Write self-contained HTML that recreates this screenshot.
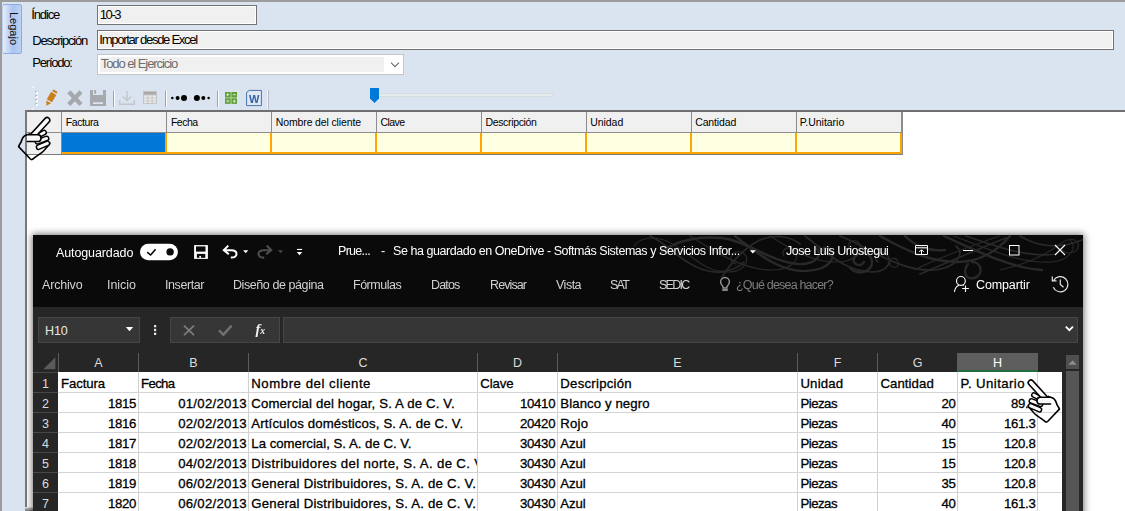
<!DOCTYPE html>
<html lang="es">
<head>
<meta charset="utf-8">
<title>Importar desde Excel</title>
<style>
html,body{margin:0;padding:0;}
body{width:1125px;height:511px;overflow:hidden;position:relative;background:#dae3f0;font-family:"Liberation Sans",sans-serif;}
.a{position:absolute;box-sizing:border-box;}
.tx{position:absolute;white-space:nowrap;line-height:20px;font-family:"Liberation Sans",sans-serif;}
#tab span{position:absolute;left:4px;top:7px;writing-mode:vertical-rl;font-size:11px;line-height:13px;color:#111;}
.g{will-change:transform;}
.k{-webkit-text-stroke:0.3px #000;}
.inp{border:1px solid #737373;background:#f0f0f0;box-shadow:inset 0 0 0 1px #fff;}
.gh{top:112px;height:21px;background:#f0f0f0;border-right:1px solid #8c8c8c;border-bottom:1px solid #8c8c8c;}
.gc{top:133px;height:21px;background:#ffffe1;border-right:2px solid #ffa500;border-bottom:2px solid #ffa500;}
.fbox{top:317px;height:26px;background:#363636;border:1px solid #464646;}
.ch{top:353px;height:19px;border-right:1px solid #5c5c5c;}
.vl{top:372px;width:1px;height:139px;background:#d0d0d0;}
.hl{left:58px;width:1003.5px;height:1px;background:#d4d4d4;}
.rl{left:33px;width:25px;height:1px;background:#474747;}
</style>
</head>
<body>
<!-- main white work area + grid frame -->
<div class="a" style="left:27px;top:112px;width:1098px;height:399px;background:#fff;"></div>
<div class="a" style="left:25px;top:110px;width:1100px;height:2px;background:#6f6f6f;"></div>
<div class="a" style="left:25px;top:110px;width:2px;height:401px;background:#7a7a7a;"></div>
<div class="a" style="left:0;top:0;width:1125px;height:2px;background:#9c9c9c;"></div>
<div class="a" style="left:0;top:0;width:2px;height:511px;background:#9c9c9c;"></div>
<!-- vertical tab -->
<div class="a" id="tab" style="left:2px;top:4px;width:20px;height:50px;border:1px solid #8dabe2;border-left:1px solid #bccff0;border-radius:3px;background:linear-gradient(90deg,#e6edf9 0%,#a9c4f0 55%,#bfd2f3 100%);"><span>Legajo</span></div>
<!-- form fields -->
<div class="a inp" style="left:97px;top:5px;width:160px;height:20px;"></div>
<div class="a inp" style="left:97px;top:30px;width:1017px;height:20px;"></div>
<div class="a" style="left:97px;top:54px;width:307px;height:21px;background:#fff;border:1px solid #c6c6c6;"><div class="a" style="left:2px;top:2px;width:284px;height:15px;background:#f0f0f0;"></div></div>

<!-- data grid -->
<div class="a gh" style="left:27px;width:35px;"></div>
<div class="a gh" style="left:27px;top:133px;width:35px;height:21px;border-bottom:none;"></div>
<div class="a gh" style="left:62px;width:105px;"></div>
<div class="a gh" style="left:167px;width:105px;"></div>
<div class="a gh" style="left:272px;width:105px;"></div>
<div class="a gh" style="left:377px;width:105px;"></div>
<div class="a gh" style="left:482px;width:105px;"></div>
<div class="a gh" style="left:587px;width:105px;"></div>
<div class="a gh" style="left:692px;width:105px;"></div>
<div class="a gh" style="left:797px;width:105px;"></div>
<div class="a gc" style="left:62px;width:105px;background:#0078d7;"></div>
<div class="a gc" style="left:167px;width:105px;"></div>
<div class="a gc" style="left:272px;width:105px;"></div>
<div class="a gc" style="left:377px;width:105px;"></div>
<div class="a gc" style="left:482px;width:105px;"></div>
<div class="a gc" style="left:587px;width:105px;"></div>
<div class="a gc" style="left:692px;width:105px;"></div>
<div class="a gc" style="left:797px;width:105px;"></div>
<div class="a" style="left:902px;top:112px;width:1px;height:43px;background:#8c8c8c;"></div>
<div class="a" style="left:27px;top:154px;width:876px;height:1px;background:#7c7c7c;"></div>

<div class="a" style="left:25px;top:507px;width:8px;height:4px;background:linear-gradient(180deg,#f4f4f4 0%,#b0b0b0 40%,#7d7d7d 100%);"></div>
<!-- Excel window -->
<div class="a" style="left:33px;top:235px;width:1050px;height:290px;background:#0a0a0a;box-shadow:0 0 7px 1px rgba(0,0,0,.55);"></div>
<div class="a" style="left:33px;top:307px;width:1050px;height:204px;background:#262626;"></div>
<div class="a fbox" style="left:38px;width:102px;"></div>
<div class="a fbox" style="left:170px;width:110px;"></div>
<div class="a fbox" style="left:283px;width:795px;"></div>
<!-- sheet -->
<div class="a" style="left:58px;top:372px;width:1003.5px;height:139px;background:#fff;"></div>
<div class="a ch" style="left:59px;width:80px;"></div>
<div class="a ch" style="left:139px;width:110px;"></div>
<div class="a ch" style="left:249px;width:229px;"></div>
<div class="a ch" style="left:478px;width:80px;"></div>
<div class="a ch" style="left:558px;width:240px;"></div>
<div class="a ch" style="left:798px;width:80px;"></div>
<div class="a ch" style="left:878px;width:80px;"></div>
<div class="a" style="left:958px;top:353px;width:80px;height:19px;background:#5e5e5e;border-bottom:2px solid #1d6f42;"></div>
<div class="a" style="left:58px;top:353px;width:1px;height:19px;background:#5c5c5c;"></div>
<div class="a vl" style="left:138px;"></div>
<div class="a vl" style="left:248px;"></div>
<div class="a vl" style="left:477px;"></div>
<div class="a vl" style="left:557px;"></div>
<div class="a vl" style="left:797px;"></div>
<div class="a vl" style="left:877px;"></div>
<div class="a vl" style="left:957px;"></div>
<div class="a vl" style="left:1037px;"></div>
<div class="a hl" style="top:392px;"></div>
<div class="a hl" style="top:412px;"></div>
<div class="a hl" style="top:432px;"></div>
<div class="a hl" style="top:452px;"></div>
<div class="a hl" style="top:472px;"></div>
<div class="a hl" style="top:492px;"></div>
<div class="a rl" style="top:392px;"></div>
<div class="a rl" style="top:412px;"></div>
<div class="a rl" style="top:432px;"></div>
<div class="a rl" style="top:452px;"></div>
<div class="a rl" style="top:472px;"></div>
<div class="a rl" style="top:492px;"></div>
<div class="a" style="left:33px;top:372px;width:25px;height:1px;background:#474747;"></div>
<!-- scrollbar -->
<div class="a" style="left:1066px;top:355px;width:13px;height:14px;background:#4f4f4f;"></div>
<div class="a" style="left:1066px;top:371px;width:13px;height:140px;background:#555555;"></div>

<svg class="a" style="left:0;top:0;" width="1125" height="511" viewBox="0 0 1125 511">
<!-- title-bar calligraphic decoration -->
<g fill="none" stroke="#292929" stroke-width="1.7" stroke-linecap="round">
<path d="M634,246 C640,238 652,236 664,240 C690,250 700,272 728,272 C748,272 752,254 740,252 C730,251 728,262 736,264" stroke-width="1.2"/>
<path d="M650,236 C668,244 680,262 704,270 C720,275 736,270 744,262"/>
<path d="M662,252 C676,240 700,236 722,238 C748,241 770,262 798,264 C816,265 824,254 816,248" stroke-width="2.4"/>
<path d="M690,236 C712,250 742,270 772,270 C792,270 802,258 794,250 C788,245 780,250 784,256" stroke-width="1.2"/>
<path d="M722,277 C728,268 740,250 760,240 C774,234 790,236 800,244"/>
<path d="M735,236 C760,256 790,280 822,268 C838,260 834,246 824,248" stroke-width="2.4"/>
<path d="M770,236 C792,250 812,262 836,262 C856,262 866,250 858,242 C852,238 846,244 850,248" stroke-width="1.2"/>
<path d="M805,236 C826,252 846,272 872,272 C888,272 894,260 886,254 C878,250 872,258 878,262"/>
<path d="M850,268 C858,276 872,272 872,262 C872,252 858,250 854,258 C852,264 860,268 864,262" stroke-width="2.4"/>
<path d="M888,262 C892,270 900,268 898,262 C896,256 888,258 890,264" stroke-width="1.2"/>
<path d="M840,236 C870,248 900,272 934,270 C956,268 966,254 956,246"/>
<path d="M880,236 C905,250 930,262 958,262 C982,262 1000,248 1010,236" stroke-width="2.4"/>
<path d="M914,270 C930,262 960,250 999,236" stroke-width="1.2"/>
<path d="M920,274 C945,264 975,250 1006,238"/>
<path d="M944,236 C975,250 1010,268 1042,270" stroke-width="2.4"/>
<path d="M954,236 C985,248 1020,264 1052,262 C1070,260 1078,248 1070,240" stroke-width="1.2"/>
<path d="M966,236 C1000,248 1030,258 1056,254"/>
<path d="M968,264 C962,272 966,280 974,278 C984,275 982,262 972,262" stroke-width="2.4"/>
<path d="M1000,270 C1020,266 1045,256 1060,244 C1068,238 1076,238 1078,244 C1080,252 1068,256 1062,250" stroke-width="1.2"/>
<path d="M1020,236 C1036,246 1058,250 1082,240"/>
<path d="M905,236 C915,246 930,252 945,250" stroke-width="2.4"/>
</g>
</svg>

<div class="tx" style="top:5.16px;font-size:13.1px;color:#000;left:31.30px;letter-spacing:-1.180px;">Índice</div>
<div class="tx" style="top:31.16px;font-size:13.1px;color:#000;left:32.30px;letter-spacing:-1.250px;">Descripción</div>
<div class="tx" style="top:53.16px;font-size:13.1px;color:#000;left:32.30px;letter-spacing:-1.257px;">Período:</div>
<div class="tx" style="top:5.16px;font-size:13.1px;color:#000;left:99.70px;letter-spacing:-1.433px;">10-3</div>
<div class="tx" style="top:30.16px;font-size:13.1px;color:#000;left:99.30px;letter-spacing:-1.305px;">Importar desde Excel</div>
<div class="tx" style="top:54.16px;font-size:13.1px;color:#6d6d6d;left:100.70px;letter-spacing:-1.106px;">Todo el Ejercicio</div>
<div class="tx" style="top:112.26px;font-size:10.5px;color:#000;left:65.80px;letter-spacing:-0.433px;">Factura</div>
<div class="tx" style="top:112.26px;font-size:10.5px;color:#000;left:170.90px;letter-spacing:-0.475px;">Fecha</div>
<div class="tx" style="top:112.26px;font-size:10.5px;color:#000;left:275.80px;letter-spacing:-0.135px;">Nombre del cliente</div>
<div class="tx" style="top:112.26px;font-size:10.5px;color:#000;left:380.60px;letter-spacing:-0.575px;">Clave</div>
<div class="tx" style="top:112.26px;font-size:10.5px;color:#000;left:485.50px;letter-spacing:-0.350px;">Descripción</div>
<div class="tx" style="top:112.26px;font-size:10.5px;color:#000;left:590.20px;letter-spacing:-0.040px;">Unidad</div>
<div class="tx" style="top:112.26px;font-size:10.5px;color:#000;left:695.20px;letter-spacing:-0.129px;">Cantidad</div>
<div class="tx" style="top:112.26px;font-size:10.5px;color:#000;left:799.70px;letter-spacing:-0.022px;">P.Unitario</div>
<div class="tx g" style="top:242.87px;font-size:12.5px;color:#ffffff;left:56.20px;letter-spacing:-0.109px;">Autoguardado</div>
<div class="tx g" style="top:240.77px;font-size:12.5px;color:#ffffff;left:338.40px;letter-spacing:-0.700px;">Prue...</div>
<div class="tx g" style="top:240.77px;font-size:12.5px;color:#ffffff;left:380.60px;letter-spacing:0.000px;">-</div>
<div class="tx g" style="top:240.77px;font-size:12.5px;color:#ffffff;left:392.50px;letter-spacing:-0.451px;">Se ha guardado en OneDrive - Softmás Sistemas y Servicios Infor...</div>
<div class="tx g" style="top:240.77px;font-size:12.5px;color:#ffffff;left:786.40px;letter-spacing:-0.511px;">Jose Luis Uriostegui</div>
<div class="tx g" style="top:274.97px;font-size:12.5px;color:#d2d2d2;left:42.10px;letter-spacing:-0.183px;">Archivo</div>
<div class="tx g" style="top:274.97px;font-size:12.5px;color:#d2d2d2;left:107.20px;letter-spacing:-0.040px;">Inicio</div>
<div class="tx g" style="top:274.97px;font-size:12.5px;color:#d2d2d2;left:165.00px;letter-spacing:-0.429px;">Insertar</div>
<div class="tx g" style="top:274.97px;font-size:12.5px;color:#d2d2d2;left:233.40px;letter-spacing:-0.420px;">Diseño de página</div>
<div class="tx g" style="top:274.97px;font-size:12.5px;color:#d2d2d2;left:353.40px;letter-spacing:-0.486px;">Fórmulas</div>
<div class="tx g" style="top:274.97px;font-size:12.5px;color:#d2d2d2;left:431.30px;letter-spacing:-0.825px;">Datos</div>
<div class="tx g" style="top:274.97px;font-size:12.5px;color:#d2d2d2;left:490.40px;letter-spacing:-0.900px;">Revisar</div>
<div class="tx g" style="top:274.97px;font-size:12.5px;color:#d2d2d2;left:556.00px;letter-spacing:-0.500px;">Vista</div>
<div class="tx g" style="top:274.97px;font-size:12.5px;color:#d2d2d2;left:610.00px;letter-spacing:-1.750px;">SAT</div>
<div class="tx g" style="top:274.97px;font-size:12.5px;color:#d2d2d2;left:659.00px;letter-spacing:-1.750px;">SEDIC</div>
<div class="tx g" style="top:274.97px;font-size:12.5px;color:#7d7d7d;left:735.80px;letter-spacing:-0.800px;">¿Qué desea hacer?</div>
<div class="tx g" style="top:274.97px;font-size:12.5px;color:#ffffff;left:976.00px;letter-spacing:-0.125px;">Compartir</div>
<div class="tx" style="top:321.37px;font-size:12.5px;color:#e6e6e6;left:45.00px;letter-spacing:-0.100px;">H10</div>
<div class="tx" style="top:352.97px;font-size:12.5px;color:#dcdcdc;left:68.50px;width:60px;text-align:center;">A</div>
<div class="tx" style="top:352.97px;font-size:12.5px;color:#dcdcdc;left:163.50px;width:60px;text-align:center;">B</div>
<div class="tx" style="top:352.97px;font-size:12.5px;color:#dcdcdc;left:333.00px;width:60px;text-align:center;">C</div>
<div class="tx" style="top:352.97px;font-size:12.5px;color:#dcdcdc;left:487.50px;width:60px;text-align:center;">D</div>
<div class="tx" style="top:352.97px;font-size:12.5px;color:#dcdcdc;left:647.50px;width:60px;text-align:center;">E</div>
<div class="tx" style="top:352.97px;font-size:12.5px;color:#dcdcdc;left:807.50px;width:60px;text-align:center;">F</div>
<div class="tx" style="top:352.97px;font-size:12.5px;color:#dcdcdc;left:887.50px;width:60px;text-align:center;">G</div>
<div class="tx" style="top:352.97px;font-size:12.5px;color:#fefefe;left:967.50px;width:60px;text-align:center;">H</div>
<div class="tx" style="top:374.17px;font-size:12.5px;color:#dcdcdc;left:15.50px;width:60px;text-align:center;">1</div>
<div class="tx" style="top:394.17px;font-size:12.5px;color:#dcdcdc;left:15.50px;width:60px;text-align:center;">2</div>
<div class="tx" style="top:414.17px;font-size:12.5px;color:#dcdcdc;left:15.50px;width:60px;text-align:center;">3</div>
<div class="tx" style="top:434.17px;font-size:12.5px;color:#dcdcdc;left:15.50px;width:60px;text-align:center;">4</div>
<div class="tx" style="top:454.17px;font-size:12.5px;color:#dcdcdc;left:15.50px;width:60px;text-align:center;">5</div>
<div class="tx" style="top:474.17px;font-size:12.5px;color:#dcdcdc;left:15.50px;width:60px;text-align:center;">6</div>
<div class="tx" style="top:494.17px;font-size:12.5px;color:#dcdcdc;left:15.50px;width:60px;text-align:center;">7</div>
<div class="tx k" style="top:373.93px;font-size:13.2px;color:#000000;left:61.00px;letter-spacing:-0.100px;">Factura</div>
<div class="tx k" style="top:373.93px;font-size:13.2px;color:#000000;left:141.00px;letter-spacing:-0.625px;">Fecha</div>
<div class="tx k" style="top:373.93px;font-size:13.2px;color:#000000;left:251.30px;letter-spacing:0.541px;">Nombre del cliente</div>
<div class="tx k" style="top:373.93px;font-size:13.2px;color:#000000;left:480.30px;letter-spacing:-0.125px;">Clave</div>
<div class="tx k" style="top:373.93px;font-size:13.2px;color:#000000;left:560.30px;letter-spacing:0.250px;">Descripción</div>
<div class="tx k" style="top:373.93px;font-size:13.2px;color:#000000;left:800.40px;letter-spacing:0.200px;">Unidad</div>
<div class="tx k" style="top:373.93px;font-size:13.2px;color:#000000;left:880.40px;letter-spacing:0.086px;">Cantidad</div>
<div class="tx k" style="top:373.93px;font-size:13.2px;color:#000000;left:960.40px;letter-spacing:0.430px;">P. Unitario</div>
<div class="tx k" style="top:393.93px;font-size:13.2px;color:#000000;left:-63.91px;width:200px;text-align:right;letter-spacing:-0.30px;">1815</div>
<div class="tx k" style="top:393.93px;font-size:13.2px;color:#000000;left:46.86px;width:200px;text-align:right;letter-spacing:0.27px;">01/02/2013</div>
<div class="tx k" style="top:393.93px;font-size:13.2px;color:#000000;left:251.30px;letter-spacing:0.158px;">Comercial del hogar, S. A de C. V.</div>
<div class="tx k" style="top:393.93px;font-size:13.2px;color:#000000;left:355.19px;width:200px;text-align:right;letter-spacing:-0.30px;">10410</div>
<div class="tx k" style="top:393.93px;font-size:13.2px;color:#000000;left:560.30px;letter-spacing:0.100px;">Blanco y negro</div>
<div class="tx k" style="top:393.93px;font-size:13.2px;color:#000000;left:800.40px;letter-spacing:-0.480px;">Piezas</div>
<div class="tx k" style="top:393.93px;font-size:13.2px;color:#000000;left:755.49px;width:200px;text-align:right;letter-spacing:-0.30px;">20</div>
<div class="tx k" style="top:393.93px;font-size:13.2px;color:#000000;left:835.49px;width:200px;text-align:right;letter-spacing:-0.30px;">89.8</div>
<div class="tx k" style="top:413.93px;font-size:13.2px;color:#000000;left:-63.91px;width:200px;text-align:right;letter-spacing:-0.30px;">1816</div>
<div class="tx k" style="top:413.93px;font-size:13.2px;color:#000000;left:46.86px;width:200px;text-align:right;letter-spacing:0.27px;">02/02/2013</div>
<div class="tx k" style="top:413.93px;font-size:13.2px;color:#000000;left:251.30px;letter-spacing:0.143px;">Artículos domésticos, S. A. de C. V.</div>
<div class="tx k" style="top:413.93px;font-size:13.2px;color:#000000;left:355.19px;width:200px;text-align:right;letter-spacing:-0.30px;">20420</div>
<div class="tx k" style="top:413.93px;font-size:13.2px;color:#000000;left:560.30px;letter-spacing:0.233px;">Rojo</div>
<div class="tx k" style="top:413.93px;font-size:13.2px;color:#000000;left:800.40px;letter-spacing:-0.480px;">Piezas</div>
<div class="tx k" style="top:413.93px;font-size:13.2px;color:#000000;left:755.49px;width:200px;text-align:right;letter-spacing:-0.30px;">40</div>
<div class="tx k" style="top:413.93px;font-size:13.2px;color:#000000;left:835.49px;width:200px;text-align:right;letter-spacing:-0.30px;">161.3</div>
<div class="tx k" style="top:433.93px;font-size:13.2px;color:#000000;left:-63.91px;width:200px;text-align:right;letter-spacing:-0.30px;">1817</div>
<div class="tx k" style="top:433.93px;font-size:13.2px;color:#000000;left:46.86px;width:200px;text-align:right;letter-spacing:0.27px;">02/02/2013</div>
<div class="tx k" style="top:433.93px;font-size:13.2px;color:#000000;left:251.30px;letter-spacing:0.007px;">La comercial, S. A. de C. V.</div>
<div class="tx k" style="top:433.93px;font-size:13.2px;color:#000000;left:355.19px;width:200px;text-align:right;letter-spacing:-0.30px;">30430</div>
<div class="tx k" style="top:433.93px;font-size:13.2px;color:#000000;left:560.30px;letter-spacing:-0.100px;">Azul</div>
<div class="tx k" style="top:433.93px;font-size:13.2px;color:#000000;left:800.40px;letter-spacing:-0.480px;">Piezas</div>
<div class="tx k" style="top:433.93px;font-size:13.2px;color:#000000;left:755.49px;width:200px;text-align:right;letter-spacing:-0.30px;">15</div>
<div class="tx k" style="top:433.93px;font-size:13.2px;color:#000000;left:835.49px;width:200px;text-align:right;letter-spacing:-0.30px;">120.8</div>
<div class="tx k" style="top:453.93px;font-size:13.2px;color:#000000;left:-63.91px;width:200px;text-align:right;letter-spacing:-0.30px;">1818</div>
<div class="tx k" style="top:453.93px;font-size:13.2px;color:#000000;left:46.86px;width:200px;text-align:right;letter-spacing:0.27px;">04/02/2013</div>
<div class="tx k" style="top:453.93px;font-size:13.2px;color:#000000;left:251.30px;letter-spacing:0.351px;width:225.7px;overflow:hidden;">Distribuidores del norte, S. A. de C. V.</div>
<div class="tx k" style="top:453.93px;font-size:13.2px;color:#000000;left:355.19px;width:200px;text-align:right;letter-spacing:-0.30px;">30430</div>
<div class="tx k" style="top:453.93px;font-size:13.2px;color:#000000;left:560.30px;letter-spacing:-0.100px;">Azul</div>
<div class="tx k" style="top:453.93px;font-size:13.2px;color:#000000;left:800.40px;letter-spacing:-0.480px;">Piezas</div>
<div class="tx k" style="top:453.93px;font-size:13.2px;color:#000000;left:755.49px;width:200px;text-align:right;letter-spacing:-0.30px;">15</div>
<div class="tx k" style="top:453.93px;font-size:13.2px;color:#000000;left:835.49px;width:200px;text-align:right;letter-spacing:-0.30px;">120.8</div>
<div class="tx k" style="top:473.93px;font-size:13.2px;color:#000000;left:-63.91px;width:200px;text-align:right;letter-spacing:-0.30px;">1819</div>
<div class="tx k" style="top:473.93px;font-size:13.2px;color:#000000;left:46.86px;width:200px;text-align:right;letter-spacing:0.27px;">06/02/2013</div>
<div class="tx k" style="top:473.93px;font-size:13.2px;color:#000000;left:251.30px;letter-spacing:0.222px;">General Distribuidores, S. A. de C. V.</div>
<div class="tx k" style="top:473.93px;font-size:13.2px;color:#000000;left:355.19px;width:200px;text-align:right;letter-spacing:-0.30px;">30430</div>
<div class="tx k" style="top:473.93px;font-size:13.2px;color:#000000;left:560.30px;letter-spacing:-0.100px;">Azul</div>
<div class="tx k" style="top:473.93px;font-size:13.2px;color:#000000;left:800.40px;letter-spacing:-0.480px;">Piezas</div>
<div class="tx k" style="top:473.93px;font-size:13.2px;color:#000000;left:755.49px;width:200px;text-align:right;letter-spacing:-0.30px;">35</div>
<div class="tx k" style="top:473.93px;font-size:13.2px;color:#000000;left:835.49px;width:200px;text-align:right;letter-spacing:-0.30px;">120.8</div>
<div class="tx k" style="top:493.93px;font-size:13.2px;color:#000000;left:-63.91px;width:200px;text-align:right;letter-spacing:-0.30px;">1820</div>
<div class="tx k" style="top:493.93px;font-size:13.2px;color:#000000;left:46.86px;width:200px;text-align:right;letter-spacing:0.27px;">06/02/2013</div>
<div class="tx k" style="top:493.93px;font-size:13.2px;color:#000000;left:251.30px;letter-spacing:0.222px;">General Distribuidores, S. A. de C. V.</div>
<div class="tx k" style="top:493.93px;font-size:13.2px;color:#000000;left:355.19px;width:200px;text-align:right;letter-spacing:-0.30px;">30430</div>
<div class="tx k" style="top:493.93px;font-size:13.2px;color:#000000;left:560.30px;letter-spacing:-0.100px;">Azul</div>
<div class="tx k" style="top:493.93px;font-size:13.2px;color:#000000;left:800.40px;letter-spacing:-0.480px;">Piezas</div>
<div class="tx k" style="top:493.93px;font-size:13.2px;color:#000000;left:755.49px;width:200px;text-align:right;letter-spacing:-0.30px;">40</div>
<div class="tx k" style="top:493.93px;font-size:13.2px;color:#000000;left:835.49px;width:200px;text-align:right;letter-spacing:-0.30px;">161.3</div>

<svg class="a" style="left:0;top:0;" width="1125" height="511" viewBox="0 0 1125 511">
<!-- toolbar grip -->
<g fill="#b9c0cc"><rect x="35" y="91" width="2" height="2"/><rect x="35" y="95" width="2" height="2"/><rect x="35" y="99" width="2" height="2"/><rect x="35" y="103" width="2" height="2"/></g>
<g fill="#ffffff"><rect x="36" y="92" width="2" height="2"/><rect x="36" y="96" width="2" height="2"/><rect x="36" y="100" width="2" height="2"/><rect x="36" y="104" width="2" height="2"/></g>
<g fill="#fff"><rect x="32.3" y="86.4" width="1.5" height="1.4"/><rect x="32.3" y="108.2" width="1.5" height="1.3"/></g>
<!-- pencil -->
<g transform="translate(50.9,98.2) rotate(30.8)" fill="#c97f1a"><rect x="-2.6" y="-8.9" width="5.2" height="2.1" rx="0.8"/><rect x="-3" y="-5.6" width="6" height="8.6"/><path d="M-2.7,4.2 L2.7,4.2 L0,8.9 Z"/></g>
<!-- delete X -->
<g stroke="#a5a8ad" stroke-width="4.3" stroke-linecap="butt"><path d="M68.8,91.7 L81,104.5 M81,91.7 L68.8,104.5"/></g>
<!-- save -->
<path fill="#a6a9ad" fill-rule="evenodd" d="M90,90 H93 V95 H103 V90 H106 V106 H90 Z M93,102.2 H103 V104.1 H93 Z"/><rect x="94.2" y="90" width="1.9" height="3.7" fill="#a6a9ad"/>
<!-- separators -->
<g><rect x="113" y="91" width="1" height="16" fill="#9ea3ab"/><rect x="114" y="91" width="1" height="16" fill="#fff"/>
<rect x="165" y="91" width="1" height="16" fill="#9ea3ab"/><rect x="166" y="91" width="1" height="16" fill="#fff"/>
<rect x="217" y="91" width="1" height="16" fill="#9ea3ab"/><rect x="218" y="91" width="1" height="16" fill="#fff"/>
<rect x="267" y="90" width="1" height="19" fill="#f3f6fa"/><rect x="268" y="90" width="1" height="19" fill="#b4b9c2"/></g>
<!-- download -->
<g stroke="#c3c6cb" stroke-width="1.4" fill="none"><path d="M127,91 V100 M123,96.5 L127,100.5 L131,96.5 M119.7,100 V104.3 H134.3 V100"/></g>
<!-- table -->
<g><rect x="143" y="91" width="14" height="13" fill="#c2c2c2"/><rect x="144" y="92" width="12" height="2.4" fill="#a9a9a9"/><g fill="#e9e9e9"><rect x="144" y="95.4" width="3.4" height="2.2"/><rect x="148.3" y="95.4" width="3.4" height="2.2"/><rect x="152.6" y="95.4" width="3.4" height="2.2"/><rect x="144" y="98.4" width="3.4" height="2.2"/><rect x="148.3" y="98.4" width="3.4" height="2.2"/><rect x="152.6" y="98.4" width="3.4" height="2.2"/><rect x="144" y="101.3" width="3.4" height="1.8"/><rect x="148.3" y="101.3" width="3.4" height="1.8"/><rect x="152.6" y="101.3" width="3.4" height="1.8"/></g></g>
<!-- dots -->
<g fill="#000"><circle cx="172.3" cy="98" r="1.25"/><circle cx="177.6" cy="98" r="2"/><circle cx="184" cy="97.9" r="3"/>
<circle cx="196.9" cy="97.9" r="3"/><circle cx="203.3" cy="98" r="2"/><circle cx="208.6" cy="98" r="1.25"/></g>
<!-- green grid -->
<rect x="225" y="92" width="12" height="11.8" fill="#a8cb92"/>
<g fill="#5f9f38"><rect x="225" y="92" width="5.4" height="5.3"/><rect x="231.6" y="92" width="5.4" height="5.3"/><rect x="225" y="98.5" width="5.4" height="5.3"/><rect x="231.6" y="98.5" width="5.4" height="5.3"/></g>
<g stroke="#e6f0dc" stroke-width="0.9"><path d="M226.3,94.7 h2.8 M227.7,93.3 v2.8 M232.9,94.7 h2.8 M226.6,100.1 l2.2,2.2 M228.8,100.1 l-2.2,2.2 M232.9,101.2 h2.8 M234.3,99.8 v2.8"/></g>
<!-- word icon -->
<path d="M246.6,105.6 V92.3 L249.3,90.4 H261.4 V105.6 Z" fill="#dfe7f2" stroke="#4a72a8" stroke-width="1"/>
<!-- slider -->
<rect x="379" y="93.5" width="174" height="3" fill="#e7eaea" stroke="#d3d7dc" stroke-width="0.8"/>
<path d="M370,88 H379 V98.5 L374.5,103 L370,98.5 Z" fill="#0078d7"/>
<!-- combo arrow -->
<path d="M391,62.6 L395,66.6 L399,62.6" fill="none" stroke="#6a6a6a" stroke-width="1.1"/>

<!-- hand cursor 1 -->
<g fill="none" stroke-linejoin="round" stroke-linecap="round">
<path d="M27,135 C24.5,135.3 22.6,137.2 21.6,140.5 C21,143 19.2,144.6 18.6,146.6 L30.4,159 C31.4,160 32.4,159.6 33.4,158.6 C37,155.2 42.5,153.3 45.6,148.6 C47.2,146.4 49.6,145 49.9,143" stroke="#000" stroke-width="1.6"/>
<path d="M38.6,147.2 L47.4,143.3" stroke="#000" stroke-width="5.8"/><path d="M38.6,147.2 L47.4,143.3" stroke="#fafafa" stroke-width="2.9"/>
<path d="M37.4,141.8 L46.6,138.4" stroke="#000" stroke-width="5.8"/><path d="M37.4,141.8 L46.6,138.4" stroke="#fafafa" stroke-width="2.9"/>
<path d="M38.5,135.6 L44.2,132.5" stroke="#000" stroke-width="5.6"/><path d="M38.5,135.6 L44.2,132.5" stroke="#fafafa" stroke-width="2.7"/>
<path d="M47.1,120.2 L32.6,136" stroke="#000" stroke-width="6.9"/><path d="M47.1,120.2 L32.6,136" stroke="#fafafa" stroke-width="3.8"/>
<path d="M27,134.8 L38,134.8 C42,134.8 42,141.5 38,141.5 L27,141.5" fill="#fafafa" stroke="none"/>
<path d="M29.6,133.9 C28.6,134.6 27.6,134.8 27,134.8 L38,134.8 C42,134.8 42,141.5 38,141.5 L27.4,141.5" stroke="#000" stroke-width="1.6"/>
</g>
<!-- hand cursor 2 (mirrored) -->
<g transform="translate(1078,262.5) scale(-1,1)" fill="none" stroke-linejoin="round" stroke-linecap="round">
<path d="M27,135 C24.5,135.3 22.6,137.2 21.6,140.5 C21,143 19.2,144.6 18.6,146.6 L30.4,159 C31.4,160 32.4,159.6 33.4,158.6 C37,155.2 42.5,153.3 45.6,148.6 C47.2,146.4 49.6,145 49.9,143" stroke="#000" stroke-width="1.6"/>
<path d="M38.6,147.2 L47.4,143.3" stroke="#000" stroke-width="5.8"/><path d="M38.6,147.2 L47.4,143.3" stroke="#fafafa" stroke-width="2.9"/>
<path d="M37.4,141.8 L46.6,138.4" stroke="#000" stroke-width="5.8"/><path d="M37.4,141.8 L46.6,138.4" stroke="#fafafa" stroke-width="2.9"/>
<path d="M38.5,135.6 L44.2,132.5" stroke="#000" stroke-width="5.6"/><path d="M38.5,135.6 L44.2,132.5" stroke="#fafafa" stroke-width="2.7"/>
<path d="M47.1,120.2 L32.6,136" stroke="#000" stroke-width="6.9"/><path d="M47.1,120.2 L32.6,136" stroke="#fafafa" stroke-width="3.8"/>
<path d="M27,134.8 L38,134.8 C42,134.8 42,141.5 38,141.5 L27,141.5" fill="#fafafa" stroke="none"/>
<path d="M29.6,133.9 C28.6,134.6 27.6,134.8 27,134.8 L38,134.8 C42,134.8 42,141.5 38,141.5 L27.4,141.5" stroke="#000" stroke-width="1.6"/>
</g>

<!-- excel: autosave toggle -->
<rect x="140" y="243.8" width="37.9" height="16.4" rx="8.2" fill="#fff"/>
<circle cx="170.1" cy="251.9" r="3.7" fill="#0a0a0a"/>
<path d="M147.2,252.2 L150.6,255 L155.6,249.2" fill="none" stroke="#0a0a0a" stroke-width="1.6"/>
<!-- save -->
<rect x="194.1" y="245.1" width="13.8" height="13.8" fill="#fff"/><rect x="196" y="246.4" width="9.5" height="5.2" fill="#0a0a0a"/><rect x="196.9" y="253.9" width="8.4" height="3.9" fill="#0a0a0a"/><rect x="199.3" y="255.9" width="1.7" height="1.9" fill="#fff"/>
<!-- undo -->
<path d="M228.3,245.6 L223.8,250.1 L228.8,254.3 M224.5,250.3 H231.3 C238.2,250.3 238.2,257.6 231.5,257.6 H230.8" fill="none" stroke="#fff" stroke-width="2"/>
<path d="M243.1,250.2 h5.2 l-2.6,3.1 z" fill="#fff"/>
<!-- redo (disabled) -->
<path d="M266.7,245.6 L271.2,250.1 L266.2,254.3 M270.5,250.3 H263.7 C256.8,250.3 256.8,257.6 263.5,257.6 H264.2" fill="none" stroke="#4d4d4d" stroke-width="2.1"/>
<path d="M277.9,250.2 h5.2 l-2.6,3.1 z" fill="#484848"/>
<!-- customize -->
<rect x="296.9" y="248.9" width="5.2" height="1.1" fill="#fff"/><path d="M296.8,252.1 h5.4 l-2.7,3.1 z" fill="#fff"/>
<!-- title dropdown -->
<path d="M749.8,250.3 h6 l-3,3.2 z" fill="#fff"/>
<!-- ribbon display options -->
<path d="M915.5,245.5 H927.5 V254.5 H915.5 Z M915.5,247.8 H927.5 M921.5,254.5 V250 M919.2,252 L921.5,249.7 L923.8,252" fill="none" stroke="#fff" stroke-width="1"/>
<!-- min / max / close -->
<path d="M963,250.5 H973" stroke="#fff" stroke-width="1"/>
<rect x="1009.5" y="245.5" width="9.5" height="9.5" fill="none" stroke="#fff" stroke-width="1"/>
<path d="M1055,245 L1065,255 M1065,245 L1055,255" stroke="#fff" stroke-width="1.1"/>
<!-- bulb -->
<path d="M723.1,288 V286.7 C721.4,284.9 720.6,283.7 720.6,282 a4.4,4.4 0 0 1 8.8,0 C729.4,283.7 728.6,284.9 726.9,286.7 V288 Z" fill="none" stroke="#949494" stroke-width="1.5"/><path d="M722.2,290 H727.8" stroke="#949494" stroke-width="1.8"/>
<!-- share person -->
<g fill="none" stroke="#f4f4f4" stroke-width="1.15"><circle cx="960.9" cy="280.9" r="4.4"/><path d="M954.4,291.9 C954.8,288.6 956.6,286.3 959,285.3 M962.8,285.2 L963.6,285.9 M965.5,285.4 V292 M962.1,288.5 H968.9"/></g>
<!-- history -->
<g fill="none" stroke="#e6e6e6" stroke-width="1.2"><path d="M1053.8,280.3 A7.6,7.6 0 1 1 1053.3,287.2 M1052.3,276.6 V280.8 H1056.5 M1060.3,279.5 V284.5 L1063.5,287.2"/></g>
<!-- name box arrow -->
<path d="M125.8,327 h7.4 l-3.7,4.2 z" fill="#ffffff"/>
<!-- dots -->
<g fill="#e6e6e6"><rect x="154" y="325" width="2.2" height="2.3"/><rect x="154" y="328.8" width="2.2" height="2.3"/><rect x="154" y="332.7" width="2.2" height="2.3"/></g>
<!-- formula buttons -->
<path d="M184,325.6 L194,335.2 M194,325.6 L184,335.2" stroke="#7d7d7d" stroke-width="1.8"/>
<path d="M219,330.3 L223.4,334.6 L231.6,325.6" fill="none" stroke="#707070" stroke-width="2.5"/>
<text x="255.6" y="333.8" font-family="Liberation Serif,serif" font-style="italic" font-weight="bold" font-size="14.5" fill="#f2f2f2">f</text>
<text x="260.2" y="334" font-family="Liberation Serif,serif" font-style="italic" font-weight="bold" font-size="9.5" fill="#f2f2f2">x</text>
<!-- expand chevron -->
<path d="M1065.8,326.6 L1069.4,330.2 L1073,326.6" fill="none" stroke="#fff" stroke-width="1.8"/>
<!-- select all triangle -->
<path d="M55.4,357.2 V369.3 H43.3 Z" fill="#5b5b5b"/>
<!-- scroll up arrow -->
<path d="M1068.3,364.8 L1072.5,360.3 L1076.7,364.8 Z" fill="#8c8c8c"/>

</svg>
<!-- W letter on word icon -->
<div class="tx" style="left:249px;top:89.3px;font-size:11px;font-weight:bold;color:#2e62a6;">W</div>

</body>
</html>
